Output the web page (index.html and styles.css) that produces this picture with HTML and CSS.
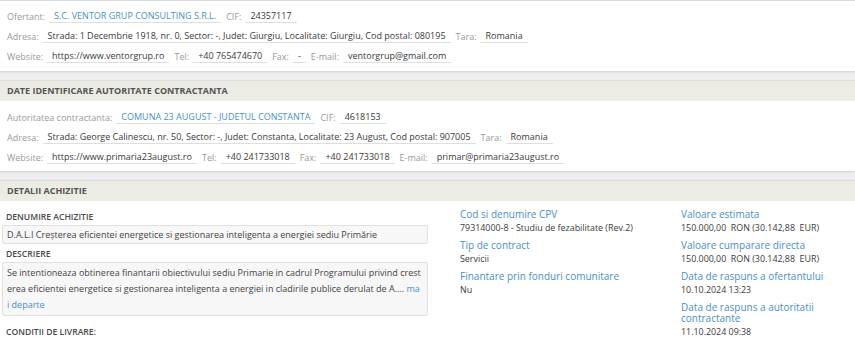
FILE: index.html
```html
<!DOCTYPE html>
<html lang="ro">
<head>
    <meta charset="UTF-8">
    <meta name="viewport" content="width=device-width, initial-scale=1.0">
    <title>Detalii achizitie</title>
    <link rel="stylesheet" href="styles.css">
</head>
<body>
    <div class="panel panel-top">
        <div class="row">
            <span class="label">Ofertant:</span>
            <span class="value link">S.C. VENTOR GRUP CONSULTING S.R.L.</span>
            <span class="label">CIF:</span>
            <span class="value">24357117</span>
        </div>
        <div class="row">
            <span class="label">Adresa:</span>
            <span class="value">Strada: 1 Decembrie 1918, nr. 0, Sector: -, Judet: Giurgiu, Localitate: Giurgiu, Cod postal: 080195</span>
            <span class="label">Tara:</span>
            <span class="value">Romania</span>
        </div>
        <div class="row">
            <span class="label">Website:</span>
            <span class="value">https://www.ventorgrup.ro</span>
            <span class="label">Tel:</span>
            <span class="value">+40 765474670</span>
            <span class="label">Fax:</span>
            <span class="value">-</span>
            <span class="label">E-mail:</span>
            <span class="value">ventorgrup@gmail.com</span>
        </div>
    </div>

    <div class="panel">
        <div class="panel-header">Date identificare autoritate contractanta</div>
        <div class="panel-rows">
            <div class="row">
                <span class="label">Autoritatea contractanta:</span>
                <span class="value link">COMUNA 23 AUGUST - JUDETUL CONSTANTA</span>
                <span class="label">CIF:</span>
                <span class="value">4618153</span>
            </div>
            <div class="row">
                <span class="label">Adresa:</span>
                <span class="value">Strada: George Calinescu, nr. 50, Sector: -, Judet: Constanta, Localitate: 23 August, Cod postal: 907005</span>
                <span class="label">Tara:</span>
                <span class="value">Romania</span>
            </div>
            <div class="row">
                <span class="label">Website:</span>
                <span class="value">https://www.primaria23august.ro</span>
                <span class="label">Tel:</span>
                <span class="value">+40 241733018</span>
                <span class="label">Fax:</span>
                <span class="value">+40 241733018</span>
                <span class="label">E-mail:</span>
                <span class="value">primar@primaria23august.ro</span>
            </div>
        </div>
    </div>

    <div class="panel">
        <div class="panel-header">Detalii achizitie</div>
        <div class="detail-grid">
            <div class="detail-left">
                <div class="field-label">Denumire achizitie</div>
                <div class="field-box">D.A.L.I Creșterea eficientei energetice si gestionarea inteligenta a energiei sediu Primărie</div>
                <div class="field-label">Descriere</div>
                <div class="field-box field-text">Se intentioneaza obtinerea finantarii obiectivului sediu Primarie in cadrul Programului privind cresterea eficientei energetice si gestionarea inteligenta a energiei in cladirile publice derulat de A.... <a class="more" href="#">mai departe</a></div>
                <div class="field-label field-last">Conditii de livrare:</div>
            </div>
            <div class="detail-col">
                <div class="info">
                    <div class="info-title">Cod si denumire CPV</div>
                    <div class="info-value">79314000-8 - Studiu de fezabilitate (Rev.2)</div>
                </div>
                <div class="info">
                    <div class="info-title">Tip de contract</div>
                    <div class="info-value">Servicii</div>
                </div>
                <div class="info">
                    <div class="info-title">Finantare prin fonduri comunitare</div>
                    <div class="info-value">Nu</div>
                </div>
            </div>
            <div class="detail-col">
                <div class="info">
                    <div class="info-title">Valoare estimata</div>
                    <div class="info-value">150.000,00&nbsp; RON (30.142,88&nbsp; EUR)</div>
                </div>
                <div class="info">
                    <div class="info-title">Valoare cumparare directa</div>
                    <div class="info-value">150.000,00&nbsp; RON (30.142,88&nbsp; EUR)</div>
                </div>
                <div class="info">
                    <div class="info-title">Data de raspuns a ofertantului</div>
                    <div class="info-value">10.10.2024 13:23</div>
                </div>
                <div class="info">
                    <div class="info-title">Data de raspuns a autoritatii contractante</div>
                    <div class="info-value">11.10.2024 09:38</div>
                </div>
            </div>
        </div>
    </div>
</body>
</html>
```

FILE: styles.css
```css
:root {
    --page-bg: #eeeef0;
    --header-bg: #ecebe4;
    --label-color: #9a9a9a;
    --text-color: #3a3a3a;
    --link-color: #4a8fc6;
    --line-color: #dedede;
}
body {
    font-family: 'Open Sans', sans-serif;
    font-size: 9px;
    margin: 0;
    background-color: var(--page-bg);
    color: var(--text-color);
    overflow: hidden;
}
.panel {
    background-color: #fff;
    border-top: 1px solid #dcdcde;
    box-shadow: 0 1px 2px rgba(0,0,0,0.12);
    margin-bottom: 9px;
}
.panel-top {
    padding: 5px 0 5px 7px;
}
.panel-header {
    background-color: var(--header-bg);
    height: 20px;
    line-height: 20px;
    padding-left: 7px;
    font-size: 9px;
    font-weight: 700;
    text-transform: uppercase;
    color: #555;
}
.panel-rows {
    padding: 6px 0 4px 7px;
}
.row {
    display: flex;
    align-items: center;
    height: 20px;
    white-space: nowrap;
}
.label {
    color: var(--label-color);
    margin-right: 4px;
}
.value {
    line-height: 12px;
    padding: 0 5px;
    margin-right: 5px;
    border-bottom: 1px solid var(--line-color);
    color: var(--text-color);
}
.value.link {
    color: var(--link-color);
}
.detail-grid {
    display: grid;
    grid-template-columns: 426px 189px 160px;
    column-gap: 32px;
    padding: 8px 0 0 2px;
}
.field-label {
    font-size: 8.6px;
    font-weight: 600;
    text-transform: uppercase;
    color: #4a4a4a;
    line-height: 10px;
    margin: 3px 0 3px 4px;
}
.field-box {
    background-color: #f7f7f7;
    border: 1px solid #e0e0e0;
    border-radius: 2px;
    padding: 3px 4px;
    line-height: 11px;
    color: #444;
    margin-bottom: 5px;
}
.field-text {
    line-height: 16px;
    padding: 2px 5px 2px 4px;
    word-break: break-all;
}
.more {
    color: var(--link-color);
    text-decoration: none;
}
.field-last {
    margin-top: 11px;
}
.info {
    margin-bottom: 7px;
}
.info-title {
    font-size: 10px;
    line-height: 10.5px;
    color: var(--link-color);
}
.info-value {
    font-size: 8.9px;
    line-height: 11px;
    margin-top: 2.5px;
    color: var(--text-color);
}
```
